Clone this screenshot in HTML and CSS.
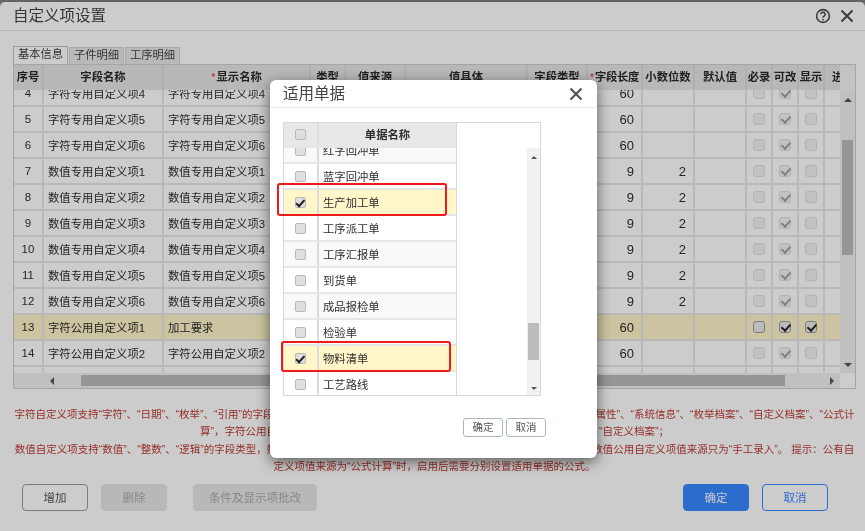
FILE: index.html
```html
<!DOCTYPE html>
<html lang="zh-CN">
<head>
<meta charset="utf-8">
<title>自定义项设置</title>
<link rel="stylesheet" href="styles.css">
</head>
<body>
<div class="stage">
  <div class="strip"></div>
  <section class="dialog">
    <header class="dlg-head">
      <h1 class="dlg-title">自定义项设置</h1>
      <div class="dlg-tools">
        <svg class="icon-help" width="16" height="16" viewBox="0 0 16 16"><circle cx="8" cy="8" r="6.4" fill="none" stroke="#4a4a4a" stroke-width="1.6"/><path d="M5.9 6.3a2.1 2.1 0 1 1 3.2 1.8c-.7.4-1.1.8-1.1 1.6" fill="none" stroke="#4a4a4a" stroke-width="1.5"/><circle cx="8" cy="11.6" r=".9" fill="#4a4a4a"/></svg>
        <svg class="icon-x" width="14" height="14" viewBox="0 0 14 14"><path d="M1.5 1.5l11 11M12.5 1.5l-11 11" stroke="#4a4a4a" stroke-width="2" fill="none"/></svg>
      </div>
    </header>
    <div class="dlg-body">
      <nav class="tabs">
        <span class="tab tab-on">基本信息</span>
        <span class="tab">子件明细</span>
        <span class="tab">工序明细</span>
      </nav>
      <div class="grid">
        <div class="grid-top">
          <div class="head-clip">
            <table class="tbl">
              <colgroup><col class="c1"><col class="c2"><col class="c3"><col class="c4"><col class="c5"><col class="c6"><col class="c7"><col class="c8"><col class="c9"><col class="c10"><col class="c11"><col class="c11"><col class="c11"><col class="c12"></colgroup>
              <tr class="hrow"><th>序号</th><th>字段名称</th><th><i class="req">*</i>显示名称</th><th>类型</th><th>值来源</th><th>值具体</th><th>字段类型</th><th class="tight"><i class="req">*</i>字段长度</th><th>小数位数</th><th>默认值</th><th>必录</th><th>可改</th><th>显示</th><th class="last">进度</th></tr>
            </table>
          </div>
          <div class="corner"></div>
        </div>
        <div class="grid-mid">
          <div class="body-clip">
            <table class="tbl tbl-body">
              <colgroup><col class="c1"><col class="c2"><col class="c3"><col class="c4"><col class="c5"><col class="c6"><col class="c7"><col class="c8"><col class="c9"><col class="c10"><col class="c11"><col class="c11"><col class="c11"><col class="c12"></colgroup>
              <tr><td class="ctr">4</td><td>字符专用自定义项4</td><td>字符专用自定义项4</td><td></td><td></td><td></td><td></td><td class="num">60</td><td></td><td></td><td class="ctr"><span class="cb"></span></td><td class="ctr"><span class="cb ck"></span></td><td class="ctr"><span class="cb"></span></td><td></td></tr>
              <tr><td class="ctr">5</td><td>字符专用自定义项5</td><td>字符专用自定义项5</td><td></td><td></td><td></td><td></td><td class="num">60</td><td></td><td></td><td class="ctr"><span class="cb"></span></td><td class="ctr"><span class="cb ck"></span></td><td class="ctr"><span class="cb"></span></td><td></td></tr>
              <tr><td class="ctr">6</td><td>字符专用自定义项6</td><td>字符专用自定义项6</td><td></td><td></td><td></td><td></td><td class="num">60</td><td></td><td></td><td class="ctr"><span class="cb"></span></td><td class="ctr"><span class="cb ck"></span></td><td class="ctr"><span class="cb"></span></td><td></td></tr>
              <tr><td class="ctr">7</td><td>数值专用自定义项1</td><td>数值专用自定义项1</td><td></td><td></td><td></td><td></td><td class="num">9</td><td class="num">2</td><td></td><td class="ctr"><span class="cb"></span></td><td class="ctr"><span class="cb ck"></span></td><td class="ctr"><span class="cb"></span></td><td></td></tr>
              <tr><td class="ctr">8</td><td>数值专用自定义项2</td><td>数值专用自定义项2</td><td></td><td></td><td></td><td></td><td class="num">9</td><td class="num">2</td><td></td><td class="ctr"><span class="cb"></span></td><td class="ctr"><span class="cb ck"></span></td><td class="ctr"><span class="cb"></span></td><td></td></tr>
              <tr><td class="ctr">9</td><td>数值专用自定义项3</td><td>数值专用自定义项3</td><td></td><td></td><td></td><td></td><td class="num">9</td><td class="num">2</td><td></td><td class="ctr"><span class="cb"></span></td><td class="ctr"><span class="cb ck"></span></td><td class="ctr"><span class="cb"></span></td><td></td></tr>
              <tr><td class="ctr">10</td><td>数值专用自定义项4</td><td>数值专用自定义项4</td><td></td><td></td><td></td><td></td><td class="num">9</td><td class="num">2</td><td></td><td class="ctr"><span class="cb"></span></td><td class="ctr"><span class="cb ck"></span></td><td class="ctr"><span class="cb"></span></td><td></td></tr>
              <tr><td class="ctr">11</td><td>数值专用自定义项5</td><td>数值专用自定义项5</td><td></td><td></td><td></td><td></td><td class="num">9</td><td class="num">2</td><td></td><td class="ctr"><span class="cb"></span></td><td class="ctr"><span class="cb ck"></span></td><td class="ctr"><span class="cb"></span></td><td></td></tr>
              <tr><td class="ctr">12</td><td>数值专用自定义项6</td><td>数值专用自定义项6</td><td></td><td></td><td></td><td></td><td class="num">9</td><td class="num">2</td><td></td><td class="ctr"><span class="cb"></span></td><td class="ctr"><span class="cb ck"></span></td><td class="ctr"><span class="cb"></span></td><td></td></tr>
              <tr class="sel"><td class="ctr">13</td><td>字符公用自定义项1</td><td>加工要求</td><td></td><td></td><td></td><td></td><td class="num">60</td><td></td><td></td><td class="ctr"><span class="cb live"></span></td><td class="ctr"><span class="cb live ck"></span></td><td class="ctr"><span class="cb live ck"></span></td><td></td></tr>
              <tr><td class="ctr">14</td><td>字符公用自定义项2</td><td>字符公用自定义项2</td><td></td><td></td><td></td><td></td><td class="num">60</td><td></td><td></td><td class="ctr"><span class="cb"></span></td><td class="ctr"><span class="cb ck"></span></td><td class="ctr"><span class="cb"></span></td><td></td></tr>
              <tr><td></td><td></td><td></td><td></td><td></td><td></td><td></td><td></td><td></td><td></td><td></td><td></td><td></td><td></td></tr>
            </table>
          </div>
          <div class="vbar">
            <span class="arr arr-up"></span>
            <span class="vthumb"></span>
            <span class="arr arr-down"></span>
          </div>
        </div>
        <div class="hbar">
          <span class="arr arr-left"></span>
          <span class="hthumb"></span>
          <span class="arr arr-right"></span>
          <span class="hcorner"></span>
        </div>
      </div>
      <div class="notes">
        <p>字符自定义项支持“字符”、“日期”、“枚举”、“引用”的字段类型，字符专用自定义项值来源可为“手工录入”、“单据表属性”、“物料属性”、“系统信息”、“枚举档案”、“自定义档案”、“公式计算”，字符公用自定义项值来源可为“手工录入”、“物料属性”、“系统信息”、“枚举档案”、“自定义档案”；</p>
        <p>数值自定义项支持“数值”、“整数”、“逻辑”的字段类型，数值专用自定义项的值来源可为“手工录入”、“物料属性”、“公式计算”，数值公用自定义项值来源只为“手工录入”。 提示：公有自定义项值来源为“公式计算”时，启用后需要分别设置适用单据的公式。</p>
      </div>
      <footer class="actions">
        <button class="btn btn-line">增加</button>
        <button class="btn btn-off">删除</button>
        <button class="btn btn-off btn-wide">条件及显示项批改</button>
        <button class="btn btn-main">确定</button>
        <button class="btn btn-ghost">取消</button>
      </footer>
    </div>
  </section>
  <div class="overlay"></div>
  <section class="modal">
    <header class="modal-head">
      <h2 class="modal-title">适用单据</h2>
      <svg class="modal-x" width="14" height="14" viewBox="0 0 14 14"><path d="M1.5 1.5l11 11M12.5 1.5l-11 11" stroke="#555" stroke-width="2.2" fill="none"/></svg>
    </header>
    <div class="modal-body">
      <div class="pick">
        <div class="pick-left">
          <div class="pick-row pick-hrow"><span class="pc1"><span class="cb2"></span></span><span class="pc2">单据名称</span></div>
          <div class="pick-clip">
            <div class="pick-row alt"><span class="pc1"><span class="cb2"></span></span><span class="pc2 pn">红字回冲单</span></div>
            <div class="pick-row"><span class="pc1"><span class="cb2"></span></span><span class="pc2 pn">蓝字回冲单</span></div>
            <div class="pick-row hit"><span class="pc1"><span class="cb2 ck2"></span></span><span class="pc2 pn">生产加工单</span></div>
            <div class="pick-row"><span class="pc1"><span class="cb2"></span></span><span class="pc2 pn">工序派工单</span></div>
            <div class="pick-row alt"><span class="pc1"><span class="cb2"></span></span><span class="pc2 pn">工序汇报单</span></div>
            <div class="pick-row"><span class="pc1"><span class="cb2"></span></span><span class="pc2 pn">到货单</span></div>
            <div class="pick-row alt"><span class="pc1"><span class="cb2"></span></span><span class="pc2 pn">成品报检单</span></div>
            <div class="pick-row"><span class="pc1"><span class="cb2"></span></span><span class="pc2 pn">检验单</span></div>
            <div class="pick-row hit"><span class="pc1"><span class="cb2 ck2"></span></span><span class="pc2 pn">物料清单</span></div>
            <div class="pick-row"><span class="pc1"><span class="cb2"></span></span><span class="pc2 pn">工艺路线</span></div>
          </div>
        </div>
        <div class="pick-right">
          <div class="pbar">
            <span class="arr2 arr2-up"></span>
            <span class="pthumb"></span>
            <span class="arr2 arr2-down"></span>
          </div>
        </div>
      </div>
      <div class="modal-actions">
        <button class="mbtn">确定</button>
        <button class="mbtn">取消</button>
      </div>
    </div>
    <span class="mark mark-a"></span>
    <span class="mark mark-b"></span>
  </section>
</div>
</body>
</html>
```
FILE: styles.css
```css
* { box-sizing: border-box; }
html, body { margin: 0; padding: 0; }
body {
  background: #fff;
  font-family: "Liberation Sans", "Noto Sans CJK SC", sans-serif;
  color: #333;
  overflow: hidden;
}
.stage {
  position: relative;
  width: 865px;
  height: 531px;
  overflow: hidden;
  filter: blur(0.35px);
  background: #8a8a8a;
}
.strip { height: 2px; background: #7d7d7d; }

.dialog {
  height: 529px;
  background: #fff;
  border-radius: 5px 5px 0 0;
}
.dlg-head {
  height: 29px;
  border-bottom: 1px solid #e6e6e6;
  padding: 0 11px 0 13px;
  display: flex;
  align-items: center;
  justify-content: space-between;
}
.dlg-title { margin: 0; font-size: 15.5px; font-weight: 400; color: #444; line-height: 28px; }
.dlg-tools { display: flex; align-items: center; gap: 9px; }
.icon-help, .icon-x { display: block; }
.dlg-body { padding: 15px 9px 0 13px; }

.tabs { display: flex; gap: 1px; align-items: flex-end; height: 18px; }
.tab {
  width: 55px;
  height: 17px;
  background: #e8e8e8;
  border: 1px solid #d2d2d2;
  border-bottom: 0;
  font-size: 11.3px;
  line-height: 15px;
  text-align: center;
  color: #444;
}
.tab-on { height: 18px; background: #fff; border-color: #c4c4c4; }

.grid { width: 843px; height: 325px; border: 1px solid #cfcfcf; display: flex; flex-direction: column; }
.grid-top { display: flex; height: 25px; flex: none; }
.head-clip { width: 826px; overflow: hidden; flex: none; }
.corner { flex: 1; background: #f4f4f4; }
.grid-mid { display: flex; height: 283px; flex: none; }
.body-clip { width: 826px; overflow: hidden; flex: none; }

.tbl { border-collapse: separate; border-spacing: 0; table-layout: fixed; width: 861px; font-size: 11.35px; }
.c1 { width: 30px; } .c2 { width: 120px; } .c3 { width: 147px; } .c4 { width: 35px; }
.c5 { width: 60px; } .c6 { width: 122px; } .c7 { width: 60px; } .c8 { width: 55px; }
.c9 { width: 52px; } .c10 { width: 52px; } .c11 { width: 26px; } .c12 { width: 50px; }
.hrow th {
  height: 25px;
  padding: 0 0 3px;
  background: #e6e6e6;
  border-right: 2px solid #dcdcdc;
  font-weight: 700;
  color: #2a2a2a;
  white-space: nowrap;
  overflow: hidden;
}
.hrow th.last { text-align: left; padding-left: 7px; border-right: 0; }
.req { color: #d33; font-style: normal; font-weight: 400; margin-right: 1px; }
.tight { letter-spacing: -0.3px; }
.tbl-body { margin-top: -9px; }
.tbl-body td {
  height: 26px;
  padding: 0 4px;
  border-right: 2px solid #e6e6e6;
  border-bottom: 2px solid #e6e6e6;
  color: #2f2f2f;
  white-space: nowrap;
  overflow: hidden;
}
.tbl-body td.ctr { text-align: center; padding: 0; font-size: 11.5px; }
.tbl-body td.num { text-align: right; padding-right: 7px; font-size: 13px; }
.tbl-body tr.sel td { background: #fff6c9; color: #2a2a2a; }

.cb {
  display: inline-block;
  position: relative;
  width: 12px;
  height: 12px;
  vertical-align: middle;
  background: #f3f3f3;
  border: 1px solid #dedede;
  border-radius: 3px;
}
.cb.live { background: #ececec; border-color: #9a9a9a; }
.cb.ck::after, .cb2.ck2::after {
  content: "";
  position: absolute;
  left: 3px;
  top: 0;
  width: 3.5px;
  height: 7px;
  border: solid #a0a0a0;
  border-width: 0 2px 2px 0;
  transform: rotate(42deg);
}
.cb.live.ck::after { border-color: #222; }

.vbar {
  flex: 1;
  background: #f1f1f1;
  display: flex;
  flex-direction: column;
  align-items: center;
  padding-top: 8px;
}
.vthumb { width: 11px; height: 115px; margin-top: 38px; background: #bcbcbc; flex: none; }
.arr { display: block; width: 0; height: 0; border: 4px solid transparent; flex: none; }
.arr-up { border-top: 0; border-bottom-color: #555; }
.arr-down { border-bottom: 0; border-top-color: #555; margin-top: auto; margin-bottom: 6px; }
.arr-left { border-left: 0; border-right-color: #555; margin-left: 36px; }
.arr-right { border-right: 0; border-left-color: #555; margin-left: 45px; }
.hbar {
  height: 15px;
  flex: none;
  background: #f1f1f1;
  display: flex;
  align-items: center;
}
.hthumb { width: 704px; height: 11px; margin-left: 27px; background: #bcbcbc; flex: none; }
.hcorner { margin-left: auto; width: 15px; height: 15px; background: #fff; }

.notes { margin-top: 17px; color: #bb3b36; font-size: 10.5px; line-height: 17.4px; text-align: center; width: 843px; }
.notes p { margin: 0; }

.actions { display: flex; margin-top: 8px; padding-left: 9px; padding-right: 28px; }
.btn {
  font: inherit;
  font-size: 11.5px;
  width: 66px;
  height: 27px;
  margin: 0 13px 0 0;
  padding: 0;
  border-radius: 4px;
  background: #fff;
  border: 1px solid #9a9a9a;
  color: #555;
}
.btn-off { background: #e6e6e6; border-color: #e6e6e6; color: #aaa; }
.btn-wide { width: 124px; margin-left: 13px; }
.btn-main { margin-left: auto; background: #3787ff; border-color: #3787ff; color: #fff; }
.btn-ghost { margin-right: 0; border-color: #3787ff; color: #3787ff; }

.overlay { position: absolute; inset: 0; background: rgba(0, 0, 0, 0.2); }

.modal {
  position: absolute;
  left: 270px;
  top: 80px;
  width: 327px;
  height: 378px;
  background: #fff;
  border-radius: 6px;
  box-shadow: 0 4px 14px rgba(0, 0, 0, 0.55);
}
.modal-head {
  height: 28px;
  border-bottom: 1px solid #ececec;
  padding: 0 14px 3px 13px;
  display: flex;
  align-items: center;
  justify-content: space-between;
}
.modal-title { margin: 0; font-size: 15.5px; font-weight: 400; color: #444; }
.modal-x { display: block; margin-top: 3px; }
.modal-body { padding: 14px 0 0 13px; }
.pick { width: 258px; height: 274px; border: 1px solid #d9d9d9; display: flex; }
.pick-left { width: 173px; flex: none; border-right: 1px solid #d9d9d9; display: flex; flex-direction: column; }
.pick-row { display: flex; height: 26px; flex: none; font-size: 11.35px; border-bottom: 2px solid #e6e6e6; background: #fff; color: #2f2f2f; }
.pick-hrow { height: 25px; background: #e8e8e8; font-weight: 700; }
.pick-hrow .pc2 { justify-content: center; }
.pick-row.alt { background: #f9f9f9; }
.pick-row.hit { background: #fff6c9; }
.pc1 { width: 35px; flex: none; border-right: 2px solid #dcdcdc; display: flex; align-items: center; justify-content: center; padding-right: 1px; }
.pc2 { flex: 1; display: flex; align-items: center; padding-bottom: 1px; }
.pn { padding-left: 4px; }
.pick-clip { flex: 1; overflow: hidden; }
.pick-clip > :first-child { margin-top: -10px; }
.cb2 {
  display: block;
  position: relative;
  width: 11px;
  height: 11px;
  background: #dfdfdf;
  border: 1px solid #b8b8b8;
  border-radius: 2px;
}
.cb2.ck2::after { border-color: #222; left: 2.5px; top: 0; width: 3px; height: 6.5px; }
.pick-right { flex: 1; display: flex; justify-content: flex-end; padding-top: 25px; }
.pbar {
  width: 13px;
  background: #f1f1f1;
  display: flex;
  flex-direction: column;
  align-items: center;
  padding-top: 8px;
}
.arr2 { display: block; width: 0; height: 0; border: 3.5px solid transparent; flex: none; }
.arr2-up { border-top: 0; border-bottom-color: #555; }
.arr2-down { border-bottom: 0; border-top-color: #555; margin-top: auto; margin-bottom: 5px; }
.pthumb { width: 11px; height: 37px; margin-top: 164px; background: #bcbcbc; flex: none; }
.modal-actions { display: flex; gap: 3px; margin-top: 22px; padding-left: 180px; }
.mbtn {
  width: 40px;
  height: 19px;
  padding: 0;
  font: inherit;
  font-size: 10.5px;
  line-height: 15px;
  color: #555;
  background: #fff;
  border: 1px solid #aab8c6;
  border-radius: 3px;
}
.mark { position: absolute; border: 2px solid #f01919; border-radius: 3px; }
.mark-a { left: 7px; top: 103px; width: 170px; height: 33px; }
.mark-b { left: 11px; top: 261px; width: 170px; height: 31px; }
```
